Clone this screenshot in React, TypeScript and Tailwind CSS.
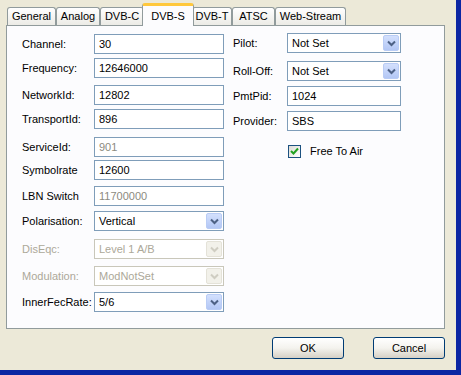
import React from "react";

const font = { fontFamily: '"Liberation Sans", Arial, sans-serif' };

type Row = {
  label: string;
  value: string;
  kind: "text" | "select";
  mt: string;
  disabled?: boolean;
  grayValue?: boolean;
};

const leftRows: Row[] = [
  { label: "Channel:", value: "30", kind: "text", mt: "mt-[0px]" },
  { label: "Frequency:", value: "12646000", kind: "text", mt: "mt-[4px]" },
  { label: "NetworkId:", value: "12802", kind: "text", mt: "mt-[7px]" },
  { label: "TransportId:", value: "896", kind: "text", mt: "mt-[4px]" },
  { label: "ServiceId:", value: "901", kind: "text", mt: "mt-[8px]", grayValue: true },
  { label: "Symbolrate", value: "12600", kind: "text", mt: "mt-[3px]" },
  { label: "LBN Switch", value: "11700000", kind: "text", mt: "mt-[6px]", grayValue: true },
  { label: "Polarisation:", value: "Vertical", kind: "select", mt: "mt-[5px]" },
  { label: "DisEqc:", value: "Level 1 A/B", kind: "select", mt: "mt-[8px]", disabled: true },
  { label: "Modulation:", value: "ModNotSet", kind: "select", mt: "mt-[7px]", disabled: true },
  { label: "InnerFecRate:", value: "5/6", kind: "select", mt: "mt-[6px]" },
];

const rightRows: Row[] = [
  { label: "Pilot:", value: "Not Set", kind: "select", mt: "mt-[0px]" },
  { label: "Roll-Off:", value: "Not Set", kind: "select", mt: "mt-[8px]" },
  { label: "PmtPid:", value: "1024", kind: "text", mt: "mt-[5px]" },
  { label: "Provider:", value: "SBS", kind: "text", mt: "mt-[5px]" },
];

const tabs = [
  { name: "General", w: "w-[49px]" },
  { name: "Analog", w: "w-[44px]" },
  { name: "DVB-C", w: "w-[44px]" },
  { name: "DVB-S", w: "w-[52px]", active: true },
  { name: "DVB-T", w: "w-[40px]" },
  { name: "ATSC", w: "w-[43px]" },
  { name: "Web-Stream", w: "w-[71px]" },
];

function Chevron({ color }: { color: string }) {
  return (
    <svg width="9" height="7" viewBox="0 0 9 7">
      <path d="M1 1.5 L4.5 5 L8 1.5" fill="none" stroke={color} strokeWidth="2" />
    </svg>
  );
}

function Field({ row, width }: { row: Row; width: string }) {
  if (row.kind === "select") {
    return (
      <div
        className={`${width} h-[20px] flex items-center border bg-white ${
          row.disabled ? "border-[#C9C7BA] text-[#ACA899]" : "border-[#7F9DB9] text-black"
        }`}
      >
        <span className="flex-1 pl-[4px] leading-none">{row.value}</span>
        <div
          className={`w-[16px] h-[16px] mr-[1px] rounded-[2px] flex items-center justify-center border ${
            row.disabled
              ? "bg-[#F2F1EA] border-[#E4E2D8]"
              : "bg-gradient-to-b from-[#D3E0FD] to-[#B3C7F5] border-[#B9CCF5]"
          }`}
        >
          <Chevron color={row.disabled ? "#CFCDC2" : "#4D6185"} />
        </div>
      </div>
    );
  }
  return (
    <div
      className={`${width} h-[20px] flex items-center border border-[#7F9DB9] bg-white pl-[4px] leading-none ${
        row.grayValue ? "text-[#8C8A80]" : "text-black"
      }`}
    >
      {row.value}
    </div>
  );
}

function Btn({ label }: { label: string }) {
  return (
    <div className="w-[72px] h-[22px] rounded-[3px] border border-[#003C74] bg-gradient-to-b from-white via-[#F4F3EE] to-[#D6D0C5] flex items-center justify-center text-black">
      {label}
    </div>
  );
}

export default function App() {
  return (
    <div
      style={font}
      className="w-[461px] h-[375px] bg-[#ECE9D8] border-r-[5px] border-b-[5px] border-[#0B26A3] text-[11px] overflow-hidden"
    >
      <div className="pl-[6px] pt-[3px]">
        {/* tab strip */}
        <div className="flex items-end h-[22px] pl-[1px]">
          {tabs.map((t) =>
            t.active ? (
              <div
                key={t.name}
                className={`${t.w} h-[23px] -mb-[1px] -mx-[2px] z-10 relative bg-[#FCFCFE] border border-b-0 border-[#919B9C] border-t-[3px] border-t-[#FFC83C] rounded-t-[3px] flex items-start justify-center pt-[2px] text-black`}
              >
                {t.name}
              </div>
            ) : (
              <div
                key={t.name}
                className={`${t.w} h-[18px] bg-gradient-to-b from-white to-[#ECEBE6] border border-b-0 border-[#919B9C] rounded-t-[3px] flex items-center justify-center text-black`}
              >
                {t.name}
              </div>
            )
          )}
        </div>

        {/* tab panel */}
        <div className="w-[439px] h-[304px] border border-[#919B9C] bg-[#FCFCFE] flex pt-[8px]">
          <div className="flex flex-col pl-[15px]">
            {leftRows.map((r) => (
              <div key={r.label} className={`flex items-center ${r.mt}`}>
                <span
                  className={`w-[72px] ${r.disabled ? "text-[#ACA899]" : "text-black"}`}
                >
                  {r.label}
                </span>
                <Field row={r} width="w-[130px]" />
              </div>
            ))}
          </div>
          <div className="flex flex-col pl-[9px] -mt-[1px]">
            {rightRows.map((r) => (
              <div key={r.label} className={`flex items-center ${r.mt}`}>
                <span className="w-[54px] text-black">{r.label}</span>
                <Field row={r} width="w-[114px]" />
              </div>
            ))}
            <div className="flex items-center mt-[12px] pl-[55px]">
              <div className="w-[13px] h-[13px] border border-[#1C5180] bg-gradient-to-br from-[#DCDBD5] to-white flex items-center justify-center">
                <svg width="9" height="9" viewBox="0 0 9 9">
                  <path d="M1 4 L3.5 6.5 L8 1.5" fill="none" stroke="#21A121" strokeWidth="2" />
                </svg>
              </div>
              <span className="ml-[9px] text-black">Free To Air</span>
            </div>
          </div>
        </div>

        {/* buttons */}
        <div className="flex justify-end gap-[29px] w-[439px] mt-[8px]">
          <Btn label="OK" />
          <Btn label="Cancel" />
        </div>
      </div>
    </div>
  );
}
